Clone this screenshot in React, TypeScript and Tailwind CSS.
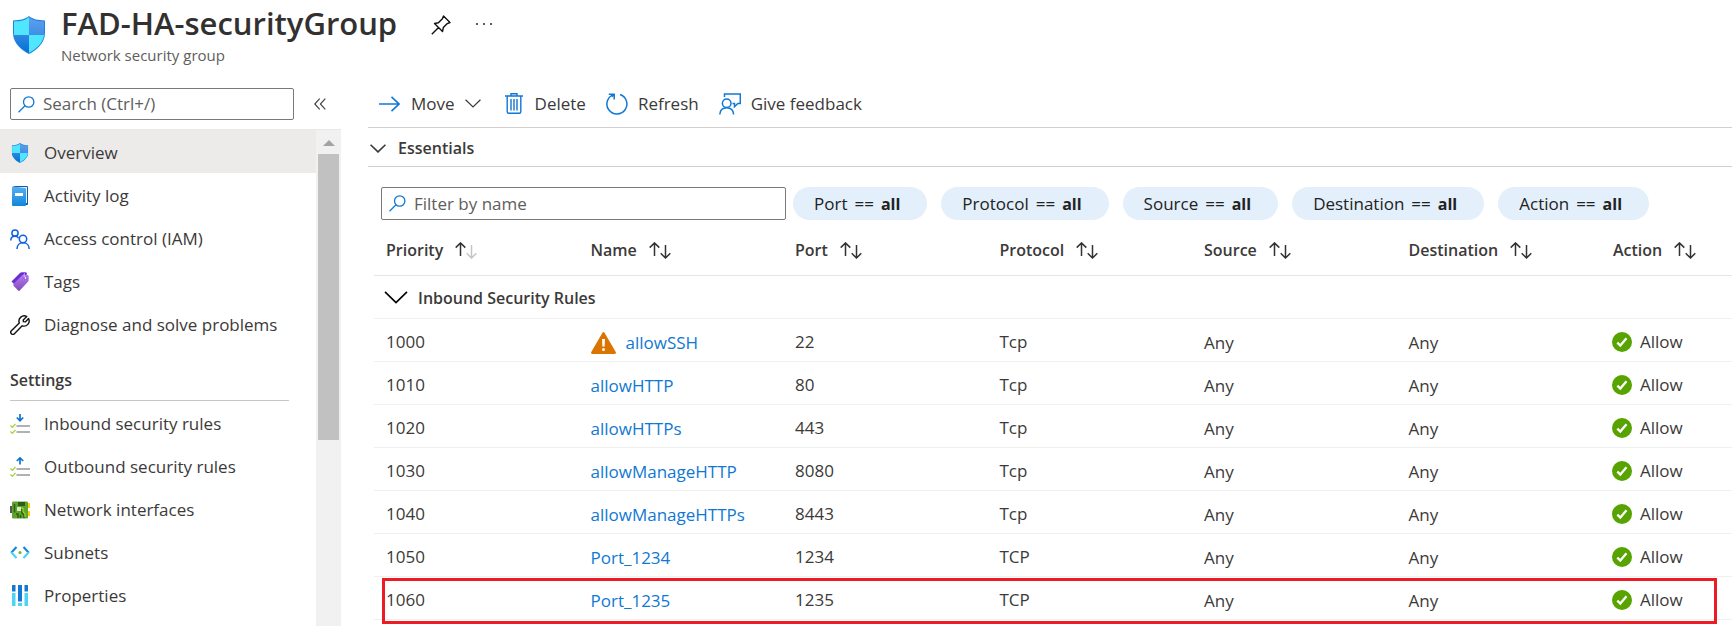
import type { ReactNode } from 'react';

function ShieldIcon({ className }: { className: string }) {
  return (
    <svg viewBox="0 0 32 38" className={className} aria-hidden="true">
      <defs>
        <linearGradient id="shieldTop" x1="0" y1="0" x2="0" y2="1">
          <stop offset="0" stopColor="#5ea0ef" />
          <stop offset="1" stopColor="#3f8ee6" />
        </linearGradient>
        <linearGradient id="shieldBottom" x1="0" y1="0" x2="0" y2="1">
          <stop offset="0" stopColor="#2f88e0" />
          <stop offset="1" stopColor="#0070d6" />
        </linearGradient>
        <clipPath id="shieldClip">
          <path d="M16 0C20 3.4 25 4.2 32 4.4V17C32 28 22 35 16 38C10 35 0 28 0 17V4.4C7 4.2 12 3.4 16 0Z" />
        </clipPath>
      </defs>
      <g clipPath="url(#shieldClip)">
        <rect width="32" height="38" fill="#1f82dd" />
        <path d="M16 1.3C12 4.6 7 5.3 1 5.5V19H16Z" fill="#50e6ff" />
        <path d="M16 1.3C20 4.6 25 5.3 31 5.5V19H16Z" fill="url(#shieldTop)" />
        <path d="M16 19H1C2 28 10 33.5 16 36.8Z" fill="url(#shieldBottom)" />
        <path d="M16 19H31C30 28 22 33.5 16 36.8Z" fill="#50e6ff" />
      </g>
    </svg>
  );
}

function LogIcon() {
  return (
    <svg viewBox="0 0 20 20" className="size-5" aria-hidden="true">
      <defs>
        <linearGradient id="book" x1="0" y1="0" x2="0" y2="1">
          <stop offset="0" stopColor="#5aaef0" />
          <stop offset="1" stopColor="#1286da" />
        </linearGradient>
      </defs>
      <path d="M3.5 0H17a1 1 0 0 1 1 1V18a1 1 0 0 1-1 1H3Z" fill="#0a5fa8" />
      <path d="M4 1H17V17H4Z" fill="#e8f4fd" />
      <path d="M2 1.6Q2 .6 3.4 .6L15 2Q16 2 16 3V19Q16 20 15 20H3Q2 20 2 19Z" fill="url(#book)" />
      <rect x="5" y="7" width="8" height="3" fill="#fff" />
    </svg>
  );
}

function PeopleIcon() {
  return (
    <svg viewBox="0 0 20 20" className="size-5" fill="none" stroke="#0f62e0" strokeWidth="1.5" aria-hidden="true">
      <circle cx="5" cy="4" r="3.1" />
      <path d="M.8 11.5C.8 8.8 2.5 7.3 5 7.3c1.6 0 2.8.6 3.6 1.7" />
      <circle cx="13" cy="10" r="3.7" />
      <path d="M7 20c0-3.6 2.4-6.2 6-6.2s6.2 2.6 6.2 6.2" />
    </svg>
  );
}

function TagIcon() {
  return (
    <svg viewBox="0 0 20 20" className="size-5" aria-hidden="true">
      <defs>
        <linearGradient id="tag" x1="0" y1="0" x2="0" y2="1">
          <stop offset="0" stopColor="#b77af0" />
          <stop offset="1" stopColor="#7f4bbd" />
        </linearGradient>
      </defs>
      <path d="M1.5 9.5L10 1Q10.8 .3 12 .3H15.5Q17 .3 17 2L9 17Z" fill="#6a2fd0" />
      <path d="M3.5 11.8L12 3.5Q12.8 2.8 14 2.8H17Q18.7 2.8 18.7 4.5V8Q18.7 9 18 9.8L9.5 18.8Q9 19.3 8.4 18.8L3.5 13.8Z" fill="url(#tag)" />
      <circle cx="15.5" cy="6" r="1.4" fill="#fff" stroke="#6a2fd0" strokeWidth=".7" />
      <path d="M15.3 5.5Q13 3 14.5 1.5" stroke="#e0cffa" strokeWidth=".9" fill="none" />
    </svg>
  );
}

function WrenchIcon() {
  return (
    <svg viewBox="0 0 20 20" className="size-5" fill="none" stroke="#111" strokeWidth="1.4" strokeLinejoin="round" aria-hidden="true">
      <path d="M16.8 1.6A5.2 5.2 0 0 0 9.3 7.9L1.4 15.7a2.1 2.1 0 0 0 3 3L12.2 10.8A5.2 5.2 0 0 0 18.6 3.6L15.3 6.9L13.4 6.6L13.2 4.9Z" />
    </svg>
  );
}

function RulesIcon({ up }: { up: boolean }) {
  return (
    <svg viewBox="0 0 20 20" className="size-5" fill="none" aria-hidden="true">
      <path d={up ? 'M10 7.5V1M6.8 4L10 .9L13.2 4' : 'M10 0V6.5M6.8 3.5L10 6.7L13.2 3.5'} stroke="#0f75cf" strokeWidth="1.7" />
      <path d="M6.5 12H20M6.5 18H20" stroke="#989898" strokeWidth="1.4" />
      <path d="M.5 11.5L2.3 13.3L5.5 10M.5 17.5L2.3 19.3L5.5 16" stroke="#a5cf35" strokeWidth="1.2" />
    </svg>
  );
}

function NicIcon() {
  return (
    <svg viewBox="0 0 20 20" className="size-5" aria-hidden="true">
      <rect x="0" y="6" width="2" height="7" fill="#555" />
      <rect x="17" y="3" width="3" height="5" rx=".5" fill="#ffca00" />
      <rect x="17" y="11" width="3" height="5" rx=".5" fill="#ffca00" />
      <rect x="2" y="1.5" width="16" height="17" rx="1.2" fill="#5ea42c" />
      <rect x="8" y="2" width="7" height="4" fill="#2f5c14" />
      <rect x="7" y="7" width="4" height="4" fill="#d5efbf" />
      <path d="M4.5 4V12.5M8 18V14H6M12 9V13L14 15V18M10.5 15V18" stroke="#2f5c14" strokeWidth="1.5" fill="none" />
      <path d="M11.5 8H13V12L15 13.5V17" stroke="#b4ec36" strokeWidth=".9" fill="none" />
    </svg>
  );
}

function SubnetIcon() {
  return (
    <svg viewBox="0 0 20 20" className="size-5" fill="none" strokeWidth="2" aria-hidden="true">
      <path d="M6.5 4L1.2 9.7M13.5 4L18.8 9.7" stroke="#1680dc" />
      <path d="M1.2 9.3L6.5 15M18.8 9.3L13.5 15" stroke="#45d5f7" />
      <circle cx="10" cy="9.5" r="1.5" fill="#6bb82e" />
    </svg>
  );
}

function PropertiesIcon() {
  return (
    <svg viewBox="0 0 20 22" className="h-[22px] w-5" aria-hidden="true">
      <path d="M2 0H5.5V6.5H2ZM8 0H12V16.5H8ZM14.5 0H18V6.5H14.5Z" fill="#1379d3" />
      <path d="M2 8H5.5V21H2ZM8 18H12V21H8ZM14.5 8H18V21H14.5Z" fill="#4cd4f5" />
    </svg>
  );
}

function SearchIcon() {
  return (
    <svg viewBox="0 0 17 17" className="size-[17px] shrink-0" fill="none" stroke="#0f78d4" strokeWidth="1.3" aria-hidden="true">
      <circle cx="10.7" cy="6" r="5.2" />
      <path d="M7 9.7L.5 16.3" />
    </svg>
  );
}

function SortIcon({ muted }: { muted?: boolean }) {
  return (
    <svg viewBox="0 0 22 17" className="h-[17px] w-[22px]" fill="none" strokeWidth="1.5" aria-hidden="true">
      <path d="M5.5 14V1M.7 5.6L5.5 .9L10.3 5.6" stroke="#333" />
      <path d="M16.5 3V16M11.7 11.3L16.5 16L21.3 11.3" stroke={muted ? '#c8c6c4' : '#333'} />
    </svg>
  );
}

function Chevron({ className, width }: { className: string; width: number }) {
  return (
    <svg viewBox="0 0 20 11" className={className} fill="none" stroke="currentColor" strokeWidth={width} aria-hidden="true">
      <path d="M.7 .8L10 9.8L19.3 .8" />
    </svg>
  );
}

function CheckIcon() {
  return (
    <svg viewBox="0 0 20 20" className="size-5" aria-hidden="true">
      <circle cx="10" cy="10" r="10" fill="#57a300" />
      <path d="M5.3 10.6L8.3 13.6L14.5 6.3" fill="none" stroke="#fff" strokeWidth="2.3" />
    </svg>
  );
}

function WarningIcon() {
  return (
    <svg viewBox="0 0 25 22" className="h-[22px] w-[25px]" aria-hidden="true">
      <path d="M12.5 1.3L23.7 20.7H1.3Z" fill="#db7500" stroke="#db7500" strokeWidth="2.4" strokeLinejoin="round" />
      <path d="M11 7H14L13.6 14.5H11.4Z" fill="#fff" />
      <circle cx="12.5" cy="17.4" r="1.5" fill="#fff" />
    </svg>
  );
}

type Item = { label: string; icon: ReactNode };

const mainItems: Item[] = [
  { label: 'Overview', icon: <ShieldIcon className="h-5 w-[18px]" /> },
  { label: 'Activity log', icon: <LogIcon /> },
  { label: 'Access control (IAM)', icon: <PeopleIcon /> },
  { label: 'Tags', icon: <TagIcon /> },
  { label: 'Diagnose and solve problems', icon: <WrenchIcon /> },
];

const settingsItems: Item[] = [
  { label: 'Inbound security rules', icon: <RulesIcon up={false} /> },
  { label: 'Outbound security rules', icon: <RulesIcon up /> },
  { label: 'Network interfaces', icon: <NicIcon /> },
  { label: 'Subnets', icon: <SubnetIcon /> },
  { label: 'Properties', icon: <PropertiesIcon /> },
];

const columns = ['Priority', 'Name', 'Port', 'Protocol', 'Source', 'Destination', 'Action'];
const filters = ['Port', 'Protocol', 'Source', 'Destination', 'Action'];

const rules = [
  { priority: 1000, name: 'allowSSH', port: 22, protocol: 'Tcp', warn: true },
  { priority: 1010, name: 'allowHTTP', port: 80, protocol: 'Tcp' },
  { priority: 1020, name: 'allowHTTPs', port: 443, protocol: 'Tcp' },
  { priority: 1030, name: 'allowManageHTTP', port: 8080, protocol: 'Tcp' },
  { priority: 1040, name: 'allowManageHTTPs', port: 8443, protocol: 'Tcp' },
  { priority: 1050, name: 'Port_1234', port: 1234, protocol: 'TCP' },
  { priority: 1060, name: 'Port_1235', port: 1235, protocol: 'TCP' },
];

function NavItem({ item, active }: { item: Item; active?: boolean }) {
  return (
    <li>
      <a
        href="#"
        aria-current={active ? 'page' : undefined}
        className={`flex h-[43px] items-center gap-3.5 pt-0.5 pl-2.5 ${active ? 'bg-[#edebe9]' : ''}`}
      >
        <span className="flex w-5 justify-center">{item.icon}</span>
        {item.label}
      </a>
    </li>
  );
}

export default function App() {
  return (
    <div className="flex min-h-screen flex-col bg-white font-['Open_Sans','Noto_Sans',sans-serif] text-[17px] leading-6 text-[#3b3a39]">
      <header className="flex h-20 items-start pl-[13px]">
        <ShieldIcon className="mt-4 h-[38px] w-8" />
        <div className="ml-4 pt-[3px]">
          <h1 className="text-[31px] leading-10 font-semibold text-[#323130]">FAD-HA-securityGroup</h1>
          <p className="text-[15px] leading-6 text-[#605e5c]">Network security group</p>
        </div>
        <button type="button" aria-label="Pin" className="mt-[15px] ml-[34px]">
          <svg viewBox="0 0 20 20" className="size-5" fill="none" stroke="#111" strokeWidth="1.4" strokeLinejoin="round" aria-hidden="true">
            <path d="M12.5 1L19 7.5L16.3 8.6L12.3 12.6L11.5 16.5L3.5 8.5L7.4 7.7L11.4 3.7ZM7.3 12.7L.8 19.2" />
          </svg>
        </button>
        <button type="button" aria-label="More" className="mt-[22px] ml-6">
          <svg viewBox="0 0 18 4" className="h-1 w-[18px]" fill="#333" aria-hidden="true">
            <circle cx="2" cy="2" r="1.1" />
            <circle cx="9" cy="2" r="1.1" />
            <circle cx="16" cy="2" r="1.1" />
          </svg>
        </button>
      </header>

      <div className="flex grow">
        <aside className="flex w-[341px] shrink-0 flex-col">
          <div className="flex h-[50px] items-start border-b border-[#e8e8e8] pt-2 pl-2.5">
            <div className="flex h-8 w-[284px] items-center gap-2 rounded-[2px] border border-[#7b7977] pl-[7px]">
              <SearchIcon />
              <input type="text" aria-label="Search" placeholder="Search (Ctrl+/)" className="min-w-0 grow outline-none placeholder:text-[#605e5c]" />
            </div>
            <button type="button" aria-label="Collapse menu" className="mt-2.5 ml-5">
              <svg viewBox="0 0 12 12" className="size-3" fill="none" stroke="#444" strokeWidth="1.2" aria-hidden="true">
                <path d="M5.7 .7L.8 6L5.7 11.3M11.3 .7L6.4 6L11.3 11.3" />
              </svg>
            </button>
          </div>
          <div className="flex grow">
            <nav className="grow">
              <ul>
                {mainItems.map((item, i) => (
                  <NavItem key={item.label} item={item} active={i === 0} />
                ))}
              </ul>
              <h2 className="mr-[27px] ml-2.5 border-b border-[#c8c6c4] pt-[23px] pb-2 text-[16px] leading-6 font-semibold">Settings</h2>
              <ul>
                {settingsItems.map((item) => (
                  <NavItem key={item.label} item={item} />
                ))}
              </ul>
            </nav>
            <div className="flex w-[25px] flex-col items-center bg-[#f1f1f1]">
              <svg viewBox="0 0 12 6" className="mt-2.5 mb-2 h-1.5 w-3" fill="#a3a3a3" aria-hidden="true">
                <path d="M6 0L12 6H0Z" />
              </svg>
              <div className="h-[286px] w-[21px] bg-[#c1c1c1]" />
            </div>
          </div>
        </aside>

        <main className="ml-[27px] min-w-0 grow">
          <div className="flex h-12 items-center border-b border-[#d2d0ce] pl-[11px]">
            <button type="button" className="flex items-center">
              <svg viewBox="0 0 21 16" className="mr-[11px] h-4 w-[21px]" fill="none" stroke="#0f78d4" strokeWidth="1.6" aria-hidden="true">
                <path d="M0 8H20M12.5 .8L20 8L12.5 15.2" />
              </svg>
              Move
              <Chevron className="ml-2.5 h-[9px] w-4" width={1.5} />
            </button>
            <button type="button" className="ml-6 flex items-center">
              <svg viewBox="0 0 18 21" className="mr-3 h-[21px] w-[18px]" fill="none" stroke="#0f78d4" strokeWidth="1.4" aria-hidden="true">
                <path d="M0 3H18M6 3V.8H12V3M2.2 3V18.8Q2.2 20.3 3.7 20.3H14.3Q15.8 20.3 15.8 18.8V3" />
                <path d="M6 6V17.5M9 6V17.5M12 6V17.5" />
              </svg>
              Delete
            </button>
            <button type="button" className="ml-5 flex items-center">
              <svg viewBox="0 0 22 22" className="mr-2.5 size-[22px]" fill="none" stroke="#0f78d4" strokeWidth="1.5" aria-hidden="true">
                <path d="M14 1.5A10 10 0 1 1 7.5 1.6M2.8 1.2H8.2V6.5M8.2 1.2L5.8 3.7" />
              </svg>
              Refresh
            </button>
            <button type="button" className="ml-5 flex items-center">
              <svg viewBox="0 0 22 22" className="mr-2.5 size-[22px]" fill="none" stroke="#0f78d4" strokeWidth="1.5" aria-hidden="true">
                <path d="M5.5 4V1H21.3V10.5H18.8L15.5 13.8V10.5H13.5" />
                <circle cx="7.7" cy="10.3" r="4.3" />
                <path d="M.8 21.5C1 17.3 3.7 14.7 7.7 14.7S14.4 17.3 14.6 21.5" />
              </svg>
              Give feedback
            </button>
          </div>

          <button type="button" className="flex h-[39px] w-full items-center gap-3 border-b border-[#d2d0ce] pt-0.5 pl-0.5 text-[16px] leading-6 font-semibold">
            <Chevron className="h-[9px] w-4" width={2} />
            Essentials
          </button>

          <div className="flex items-center pt-5 pl-[13px]">
            <div className="mr-[7px] flex h-[33px] w-[405px] shrink-0 items-center gap-2 rounded-[2px] border border-[#7b7977] pl-[7px]">
              <SearchIcon />
              <input type="text" aria-label="Filter by name" placeholder="Filter by name" className="min-w-0 grow outline-none placeholder:text-[#605e5c]" />
            </div>
            <div className="flex gap-3.5">
              {filters.map((f) => (
                <button key={f} type="button" className="flex h-[33px] items-center gap-[7px] rounded-full bg-[#e3f0fb] pr-[27px] pl-[21px] whitespace-nowrap text-[#222]">
                  <span>{f}</span>
                  <span>==</span>
                  <b className="text-[16px]">all</b>
                </button>
              ))}
            </div>
          </div>

          <div className="relative ml-1.5">
            <table className="w-full table-fixed border-collapse text-left">
              <colgroup>
                {columns.slice(0, 6).map((c) => (
                  <col key={c} className="w-[15.06%]" />
                ))}
                <col />
              </colgroup>
              <thead>
                <tr className="h-[55px] border-b border-[#e6e6e6]">
                  {columns.map((c, i) => (
                    <th key={c} scope="col" className="p-0 pt-1.5 pl-3 text-[16px] leading-6 font-semibold">
                      <button type="button" className="flex items-center gap-3">
                        {c}
                        <SortIcon muted={i === 0} />
                      </button>
                    </th>
                  ))}
                </tr>
              </thead>
              <tbody>
                <tr className="h-[43px] border-b border-[#f0f0f0]">
                  <th colSpan={7} scope="colgroup" className="p-0 pt-0.5 pl-2.5 text-[16px] leading-6 font-semibold">
                    <button type="button" className="flex items-center gap-2.5">
                      <Chevron className="h-[13px] w-6 text-black" width={1.4} />
                      Inbound Security Rules
                    </button>
                  </th>
                </tr>
                {rules.map((r) => (
                  <tr key={r.priority} className="h-[43px] border-b border-[#f0f0f0]">
                    <td className="p-0 pt-1 pl-3">{r.priority}</td>
                    <td className="p-0 pt-1.5 pl-3">
                      <span className="flex items-center gap-2.5">
                        {r.warn && <WarningIcon />}
                        <a href="#" className="text-[#0f78d4]">{r.name}</a>
                      </span>
                    </td>
                    <td className="p-0 pt-1 pl-3">{r.port}</td>
                    <td className="p-0 pt-1 pl-3">{r.protocol}</td>
                    <td className="p-0 pt-1.5 pl-3">Any</td>
                    <td className="p-0 pt-1.5 pl-3">Any</td>
                    <td className="p-0 pt-1 pl-[11px]">
                      <span className="flex items-center gap-2">
                        <CheckIcon />
                        Allow
                      </span>
                    </td>
                  </tr>
                ))}
              </tbody>
            </table>
            <div className="pointer-events-none absolute right-[15px] -bottom-1 left-2 h-[46px] border-3 border-[#ed1c24]" />
          </div>
        </main>
      </div>
    </div>
  );
}
